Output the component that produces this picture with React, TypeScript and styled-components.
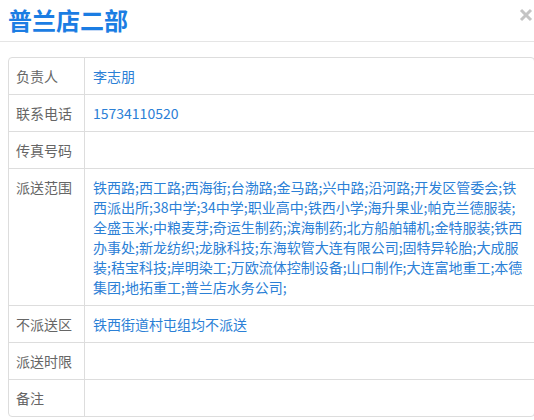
import React from "react";
import styled, { createGlobalStyle } from "styled-components";

const Global = createGlobalStyle`
  html, body { margin: 0; padding: 0; background: #fff; overflow: hidden; }
  body { font-family: "Microsoft YaHei", "Noto Sans CJK SC", sans-serif; }
`;

const Page = styled.div`
  width: 534px;
  height: 420px;
  overflow: hidden;
`;

const Header = styled.div`
  display: flex;
  align-items: flex-start;
  justify-content: space-between;
  height: 42px;
  padding: 0 1px 0 8px;
  border-bottom: 1px solid #e5e5e5;
  box-sizing: border-box;
`;

const Title = styled.h1`
  margin: 0;
  font-size: 24px;
  line-height: 40px;
  font-weight: bold;
  color: #1b7de3;
`;

const Close = styled.button`
  border: 0;
  background: none;
  padding: 0;
  margin-top: 8px;
  width: 14px;
  height: 14px;
  display: flex;
  cursor: pointer;
`;

const Body = styled.div`
  padding: 15px 0 0 8px;
`;

const Table = styled.table`
  width: 527px;
  border-collapse: separate;
  border-spacing: 0;
  border: 1px solid #ddd;
  border-radius: 4px;
  font-size: 14px;
  line-height: 20px;
`;

const Row = styled.tr<{ $first?: boolean }>`
  & > td {
    border-top: ${(p) => (p.$first ? "0" : "1px solid #ddd")};
  }
`;

const Label = styled.td`
  width: 60px;
  padding: 8px 8px 8px 7px;
  color: #666;
  vertical-align: top;
  border-right: 1px solid #ddd;
  white-space: nowrap;
`;

const Value = styled.td`
  padding: 8px 8px 8px 8px;
  color: #2b80d6;
  vertical-align: top;
  height: 20px;
`;

const rows: [string, string][] = [
  ["负责人", "李志朋"],
  ["联系电话", "15734110520"],
  ["传真号码", ""],
  [
    "派送范围",
    "铁西路;西工路;西海街;台渤路;金马路;兴中路;沿河路;开发区管委会;铁西派出所;38中学;34中学;职业高中;铁西小学;海升果业;帕克兰德服装;全盛玉米;中粮麦芽;奇运生制药;滨海制药;北方船舶辅机;金特服装;铁西办事处;新龙纺织;龙脉科技;东海软管大连有限公司;固特异轮胎;大成服装;秸宝科技;岸明染工;万欧流体控制设备;山口制作;大连富地重工;本德集团;地拓重工;普兰店水务公司;",
  ],
  ["不派送区", "铁西街道村屯组均不派送"],
  ["派送时限", ""],
  ["备注", ""],
];

export default function App() {
  return (
    <Page>
      <Global />
      <Header>
        <Title>普兰店二部</Title>
        <Close aria-label="关闭">
          <svg width="14" height="14" viewBox="0 0 14 14">
            <path d="M2 2 L12 12 M12 2 L2 12" stroke="#c4c4c4" strokeWidth="3" strokeLinecap="butt" />
          </svg>
        </Close>
      </Header>
      <Body>
        <Table>
          <tbody>
            {rows.map(([k, v], i) => (
              <Row key={k} $first={i === 0}>
                <Label>{k}</Label>
                <Value>{v}</Value>
              </Row>
            ))}
          </tbody>
        </Table>
      </Body>
    </Page>
  );
}
